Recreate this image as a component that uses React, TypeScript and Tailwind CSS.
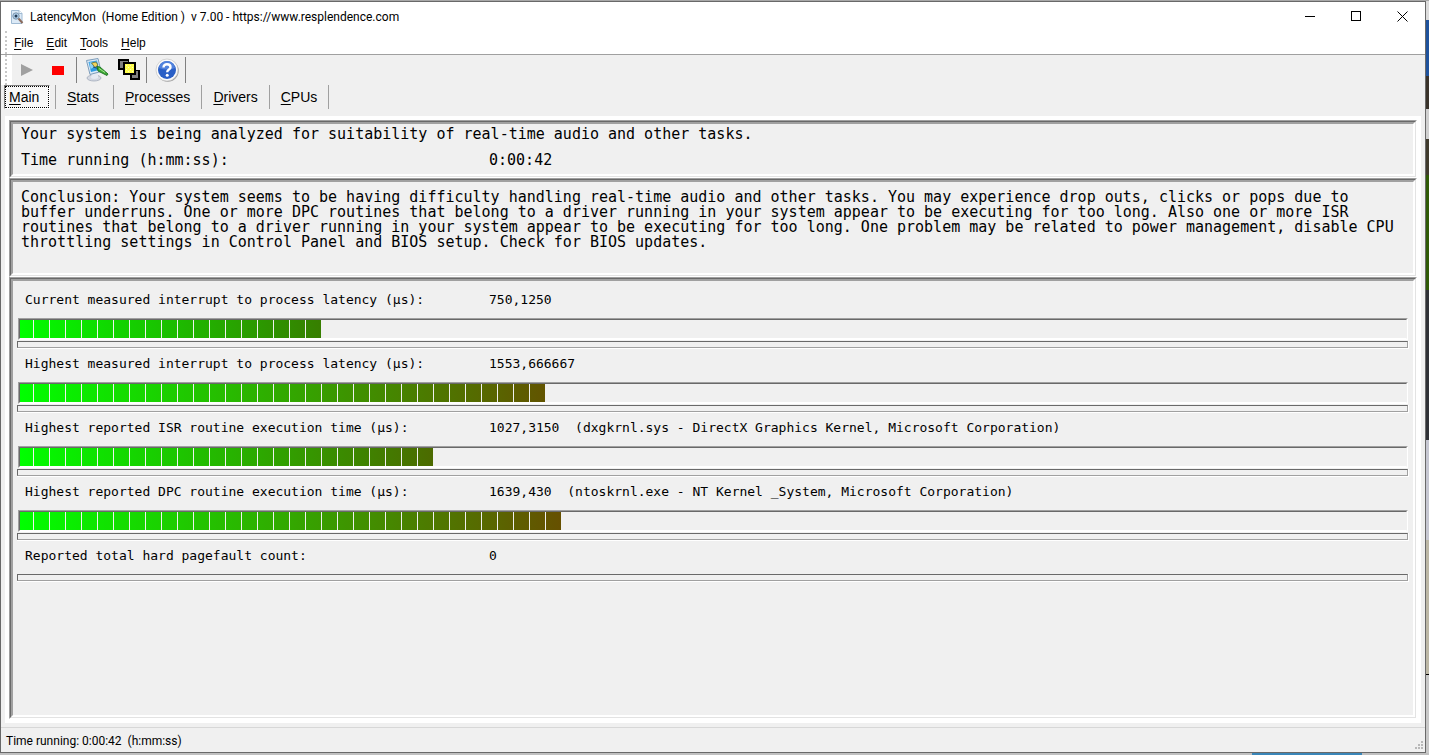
import type { ReactNode } from 'react';

type RGB = [number, number, number];
type Meter = { id: string; label: string; value: string; detail?: string; blocks: number; end: RGB };

const METERS: Meter[] = [
  {
    id: 'current',
    label: 'Current measured interrupt to process latency (µs):',
    value: '750,1250',
    blocks: 19,
    end: [55, 126, 0],
  },
  {
    id: 'highest',
    label: 'Highest measured interrupt to process latency (µs):',
    value: '1553,666667',
    blocks: 33,
    end: [98, 84, 0],
  },
  {
    id: 'isr',
    label: 'Highest reported ISR routine execution time (µs):',
    value: '1027,3150',
    detail: '(dxgkrnl.sys - DirectX Graphics Kernel, Microsoft Corporation)',
    blocks: 26,
    end: [76, 106, 0],
  },
  {
    id: 'dpc',
    label: 'Highest reported DPC routine execution time (µs):',
    value: '1639,430',
    detail: '(ntoskrnl.exe - NT Kernel _System, Microsoft Corporation)',
    blocks: 34,
    end: [102, 80, 0],
  },
];

const MENU = ['File', 'Edit', 'Tools', 'Help'];
const TABS = ['Main', 'Stats', 'Processes', 'Drivers', 'CPUs'];

// First letter is the keyboard mnemonic
function Mnemonic({ text }: { text: string }) {
  return (
    <>
      <span className="underline underline-offset-2">{text[0]}</span>
      {text.slice(1)}
    </>
  );
}

function AppIcon() {
  return (
    <svg width="16" height="16" viewBox="0 0 16 16" aria-hidden="true">
      <path d="M2.500 1.500h7.500l3 3v10H2.500z" fill="#dceaf7" stroke="#9fbad3" />
      <path d="M10 1.500v3h3" fill="#fff" stroke="#9fbad3" />
      <circle cx="7" cy="7" r="3.200" fill="#b4d3ee" stroke="#7b93aa" />
      <circle cx="7" cy="7" r="1.500" fill="#243b55" />
      <path d="M9.500 9.500l4 4.500" stroke="#8b6a5a" strokeWidth="2" />
    </svg>
  );
}

function OptionsIcon() {
  return (
    <svg width="24" height="24" viewBox="0 0 24 24" aria-hidden="true">
      <ellipse cx="9" cy="20" rx="7" ry="3" fill="#d5d9e2" stroke="#9aa3b5" strokeWidth="0.7" />
      <path d="M7 14l6 1v5q-4 2-7 0z" fill="#e6eaf2" />
      <path d="M1.500 2.500l11.500-2 3 13-11 3z" fill="#dbe9f6" stroke="#7d9dbb" />
      <path d="M3.500 4l8.500-1.500 2 9.500-8 2z" fill="#2f9be0" />
      <path d="M4.500 4.500l7-1 1 4-7 3.500z" fill="#8fd2f7" />
      <path d="M6.500 5l4.500-1 2 3-3 2.500z" fill="#f3d35b" stroke="#4b5a2a" strokeWidth="0.7" />
      <path d="M8 9l5 1.500" stroke="#234f7a" />
      <path d="M12 8.500l3 .5 8 7-1 1.500-9-4.500z" fill="#3eab35" stroke="#1d6e21" strokeWidth="0.9" />
      <path d="M14 10.500l6 4" stroke="#a5e58c" />
    </svg>
  );
}

function WindowsIcon() {
  return (
    <svg width="24" height="24" viewBox="0 0 24 24" shapeRendering="crispEdges" aria-hidden="true">
      <path d="M1 1h11v11H1z" />
      <path d="M3 3h8v7H3z" fill="#808080" />
      <path d="M13 12h10v10H13z" />
      <path d="M15 13h6v7h-6z" fill="#808080" />
      <path d="M6 4h13v13H6z" />
      <path d="M8 6h9v9H8z" fill="#ffff4d" />
      <path d="M9 7h1v1H9zM13 7h1v1h-1zM11 9h1v1h-1zM15 9h1v1h-1zM9 11h1v1H9zM13 11h1v1h-1zM11 13h1v1h-1zM15 13h1v1h-1z" fill="#fffbc0" />
    </svg>
  );
}

function HelpIcon() {
  return (
    <svg width="24" height="24" viewBox="0 0 24 24" aria-hidden="true">
      <circle cx="12.700" cy="12.700" r="11" fill="#9c9c9c" />
      <circle cx="12" cy="12" r="11" fill="#fafafa" stroke="#c4c4c4" strokeWidth="0.7" />
      <circle cx="12" cy="12" r="9" fill="#2a5fc6" />
      <path d="M4 10a8 7 0 0 1 16 0q-8 3-16 0z" fill="#5182dc" />
      <path d="M8.500 9.500c0-4.500 7-4 7-.3 0 2.500-3.300 2.300-3.300 5" fill="none" stroke="#fff" strokeWidth="2.400" />
      <circle cx="12.200" cy="17.300" r="1.500" fill="#fff" />
    </svg>
  );
}

function Separator() {
  return <div className="h-[26px] w-px bg-[#808080]" />;
}

function Groove({ className = '', children }: { className?: string; children: ReactNode }) {
  return (
    <section className={`flex flex-col border border-t-[#a0a0a0] border-l-[#a0a0a0] border-r-white border-b-white ${className}`}>
      <div className="flex flex-1 flex-col border border-t-[#696969] border-l-[#696969] border-r-[#e3e3e3] border-b-[#e3e3e3]">
        <div className="flex-1 border-2 border-t-[#a0a0a0] border-l-[#a0a0a0] border-r-white border-b-white bg-[#f0f0f0]">
          {children}
        </div>
      </div>
    </section>
  );
}

function Divider() {
  return (
    <div className="mr-1 border-r border-b border-white">
      <div className="h-[7px] border border-t-[#696969] border-l-[#696969] border-r-[#a0a0a0] border-b-[#a0a0a0]" />
    </div>
  );
}

// Blocks fade from pure green to the end colour of the reading
function blockColor(end: RGB, t: number) {
  const [r, g, b] = end;
  return `rgb(${Math.round(r * t)}, ${Math.round(255 + (g - 255) * t)}, ${Math.round(b * t)})`;
}

function LatencyBar({ blocks, end }: { blocks: number; end: RGB }) {
  return (
    <div className="mr-[5px] mb-px ml-px border border-t-[#a0a0a0] border-l-[#a0a0a0] border-r-white border-b-white">
      <div className="flex h-5 border border-t-[#696969] border-r-transparent border-b-white border-l-[#696969]">
        {Array.from({ length: blocks }, (_, i) => (
          <div
            key={i}
            className="w-4 shrink-0 border-r border-[#f0f0f0] bg-clip-padding first:w-[14px] last:w-[15px] last:border-r-0"
            style={{
              backgroundImage: `linear-gradient(to right, ${blockColor(end, i / blocks)}, ${blockColor(end, (i + 1) / blocks)})`,
            }}
          />
        ))}
      </div>
    </div>
  );
}

function Row({ label, value, detail }: Pick<Meter, 'label' | 'value' | 'detail'>) {
  return (
    <div className="flex h-[33px] items-center pb-1 pl-2 text-[13px] leading-4 whitespace-pre">
      <span className="w-[464px] shrink-0">{label}</span>
      <span>{detail ? `${value}  ${detail}` : value}</span>
    </div>
  );
}

// Sliver of the desktop that shows past the right edge of the window
function DesktopEdge() {
  return (
    <div className="flex w-[3px] flex-col bg-[#c8c8c8]" aria-hidden="true">
      <div className="grow-[19] bg-[#dcdcdc]" />
      <div className="grow-[56] bg-[#1f529c]" />
      <div className="grow-[33] bg-[#3a332b]" />
      <div className="grow-[30] bg-[#d0d0d0]" />
      <div className="grow-[36] bg-[#3f3a2c]" />
      <div className="grow-[116] bg-[#2f5a05]" />
      <div className="grow-[150] bg-[#2f3136]" />
      <div className="grow-[100] bg-[#c6c7d2]" />
      <div className="grow-[135] bg-[#bdb8a6]" />
      <div className="h-px bg-black" />
      <div className="grow-[78] bg-[#c8c8c8]" />
    </div>
  );
}

export default function App() {
  return (
    <div className="flex min-h-screen flex-col bg-[#a8a8a8] pt-px text-black">
      <div className="flex flex-1">
        <div className="flex min-w-0 flex-1 flex-col border border-[#696969] bg-[#f0f0f0]">
          <header className="flex h-[29px] items-center bg-white pl-2">
            <AppIcon />
            <h1 className="ml-[5px] flex-1 font-['Roboto',sans-serif] text-[12px] whitespace-pre">
              {'LatencyMon  (Home Edition )  v 7.00 - https://www.resplendence.com'}
            </h1>
            <button aria-label="Minimize" className="flex h-full w-[46px] items-center justify-center">
              <svg width="11" height="11" viewBox="0 0 11 11"><path d="M0 5.500h10" stroke="#000" /></svg>
            </button>
            <button aria-label="Maximize" className="flex h-full w-[46px] items-center justify-center">
              <svg width="11" height="11" viewBox="0 0 11 11">
                <rect x="0.500" y="0.500" width="9" height="9" fill="none" stroke="#000" />
              </svg>
            </button>
            <button aria-label="Close" className="flex h-full w-[46px] items-center justify-center">
              <svg width="11" height="11" viewBox="0 0 11 11">
                <path d="M0.500 0.500l10 10M10.500 0.500l-10 10" stroke="#000" />
              </svg>
            </button>
          </header>

          <nav className="flex h-6 items-center border-b border-[#a0a0a0] bg-white font-['Liberation_Sans',Arial,sans-serif] text-[12px]">
            <div className="mr-[7px] ml-1 h-full border-l-2 border-dotted border-[#c8c8c8]" />
            {MENU.map((item) => (
              <button key={item} className="mr-[13px]"><Mnemonic text={item} /></button>
            ))}
          </nav>

          <div className="flex h-[30px] items-center">
            <div className="flex h-full w-[11px] bg-white pl-1">
              <div className="h-full border-l-2 border-dotted border-[#c8c8c8]" />
            </div>
            <button aria-label="Start" className="flex w-[30px] justify-center">
              <svg width="12" height="12" viewBox="0 0 12 12"><path d="M0 0l12 6-12 6z" fill="#a0a0a0" /></svg>
            </button>
            <button aria-label="Stop" className="mr-[2px] flex w-8 justify-center">
              <span className="h-[9px] w-3 bg-[#ff0000]" />
            </button>
            <Separator />
            <button aria-label="Options" className="ml-2"><OptionsIcon /></button>
            <button aria-label="Windows" className="mr-[5px] ml-2"><WindowsIcon /></button>
            <Separator />
            <button aria-label="Help" className="mr-[6px] ml-2"><HelpIcon /></button>
            <Separator />
          </div>

          <div
            role="tablist"
            className="flex h-6 shrink-0 items-stretch pl-[3px] font-['Liberation_Sans',Arial,sans-serif] text-[14px] leading-5"
          >
            {TABS.map((tab, i) =>
              i === 0 ? (
                <button
                  key={tab}
                  role="tab"
                  aria-selected
                  className="mr-[5px] flex w-[46px] border border-t-[#808080] border-r-white border-b-white border-l-[#808080] bg-[#f8f8f8]"
                >
                  <span className="h-full flex-1 border border-dotted border-black pl-[3px] text-left">
                    <Mnemonic text={tab} />
                  </span>
                </button>
              ) : (
                <button
                  key={tab}
                  role="tab"
                  aria-selected={false}
                  className="min-w-[58px] border-l border-[#a0a0a0] px-[11px] text-left last:border-r"
                >
                  <Mnemonic text={tab} />
                </button>
              )
            )}
          </div>

          <main className="mx-1 mt-[7px] mb-1 flex flex-1 flex-col bg-white p-1 font-['DejaVu_Sans_Mono','Lucida_Console',monospace]">
            <Groove>
              <div className="h-[50px] pl-2 text-[15px] leading-5 whitespace-pre">
                <p>Your system is being analyzed for suitability of real-time audio and other tasks.</p>
                <p className="mt-[6px] flex">
                  <span className="w-[468px]">Time running (h:mm:ss):</span>
                  <span>0:00:42</span>
                </p>
              </div>
            </Groove>

            <Groove>
              <p className="min-h-[91px] pt-2 pr-4 pl-2 text-[15px] leading-[15px]">
                Conclusion: Your system seems to be having difficulty handling real-time audio and other tasks. You may
                experience drop outs, clicks or pops due to buffer underruns. One or more DPC routines that belong to a
                driver running in your system appear to be executing for too long. Also one or more ISR routines that
                belong to a driver running in your system appear to be executing for too long. One problem may be
                related to power management, disable CPU throttling settings in Control Panel and BIOS setup. Check for
                BIOS updates.
              </p>
            </Groove>

            <Groove className="flex-1">
              <div className="pt-1 pl-1">
                {METERS.map((m) => (
                  <div key={m.id}>
                    <Row label={m.label} value={m.value} detail={m.detail} />
                    <LatencyBar blocks={m.blocks} end={m.end} />
                    <Divider />
                  </div>
                ))}
                <Row label="Reported total hard pagefault count:" value="0" />
                <Divider />
              </div>
            </Groove>
          </main>

          <footer className="flex h-[25px] items-center border-t border-[#d7d7d7] pt-px pr-px pl-[5px] font-['Roboto',sans-serif] text-[12px] whitespace-pre">
            <span className="flex-1">{'Time running: 0:00:42  (h:mm:ss)'}</span>
            <svg width="9" height="8" viewBox="0 0 9 8" className="mt-2" fill="#b8b8b8" aria-hidden="true">
              <path d="M6 0h2v2H6zM3 3h2v2H3zM6 3h2v2H6zM0 6h2v2H0zM3 6h2v2H3zM6 6h2v2H6z" />
            </svg>
          </footer>
        </div>
        <DesktopEdge />
      </div>
      <div className="flex h-[2px] justify-end bg-[#c0c0c0] pr-[67px]" aria-hidden="true">
        <div className="w-[110px] bg-[#3a86b8]" />
      </div>
    </div>
  );
}
